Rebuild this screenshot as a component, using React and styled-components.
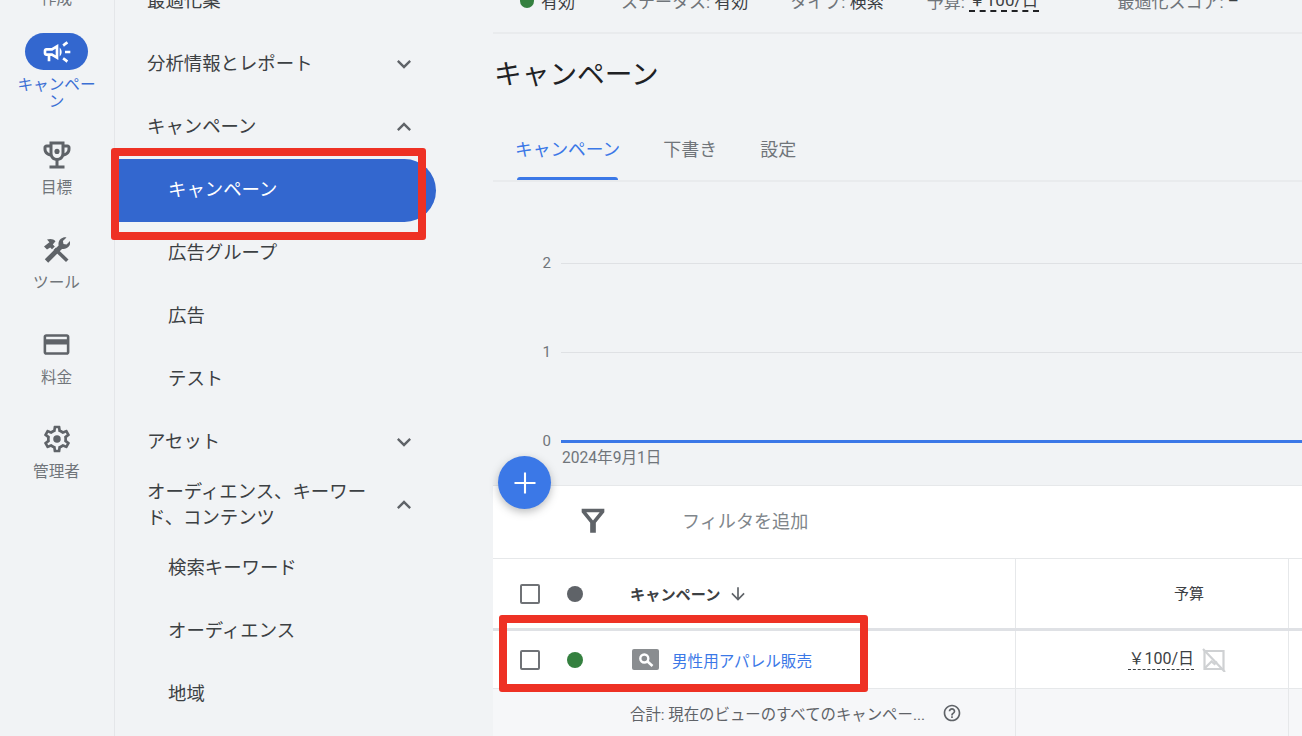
import React from 'react';
import styled, { createGlobalStyle } from 'styled-components';

const Global = createGlobalStyle`
  html, body { margin: 0; height: 100%; overflow: hidden; background: #f1f3f5; }
  body { font-family: Roboto, "Noto Sans CJK JP", sans-serif; }
  #root { height: 736px; }
`;

const Page = styled.div`
  position: relative;
  display: grid;
  grid-template-columns: 115px 378px 809px;
  width: 1302px;
  height: 736px;
  overflow: hidden;
  background: #f1f3f5;
`;

const Rail = styled.nav`
  display: flex;
  flex-direction: column;
  align-items: center;
  border-right: 1px solid #e4e6e9;
  margin-top: -12px;
  padding-right: 1px;
  height: 748px;
  box-sizing: border-box;
`;
const RailClip = styled.div`
  height: 13px;
  margin-bottom: 32px;
  font-size: 15.6px;
  line-height: 22px;
  color: #70757a;
`;
const RailItem = styled.div`
  display: flex;
  flex-direction: column;
  align-items: center;
  width: 80px;
  height: ${p => p.$h}px;
  font-size: 15.6px;
  line-height: 17px;
  text-align: center;
  color: ${p => (p.$active ? '#3b6fd4' : '#70757a')};
`;
const Pill = styled.div`
  display: flex;
  align-items: center;
  justify-content: center;
  width: 63px;
  height: 37px;
  margin-bottom: 7px;
  border-radius: 19px;
  background: ${p => (p.$active ? '#3367cf' : 'transparent')};
  color: ${p => (p.$active ? '#fff' : '#5f6368')};
`;

const Side = styled.aside`
  display: flex;
  flex-direction: column;
  margin-top: -31px;
`;
const NavRow = styled.div`
  display: flex;
  align-items: center;
  justify-content: space-between;
  box-sizing: border-box;
  flex: none;
  height: 63px;
  width: ${p => (p.$selected ? '321px' : '378px')};
  padding: 0 ${p => (p.$selected ? '0' : '75px')} ${p => (p.$selected ? '2px' : '0')} ${p => (p.$child ? '53px' : '32px')};
  font-size: 18.4px;
  line-height: 26px;
  color: ${p => (p.$selected ? '#fff' : '#3c4043')};
  background: ${p => (p.$selected ? '#3367cf' : 'transparent')};
  border-radius: ${p => (p.$selected ? '0 32px 32px 0' : '0')};
  ${p => p.$selected && 'margin: 1px 0 -1px;'}
`;
const NavLabel = styled.span`
  width: ${p => (p.$wrap ? '226px' : 'auto')};
`;
const Chevron = styled.span`
  display: flex;
  color: #5f6368;
`;

const Main = styled.main`
  display: flex;
  flex-direction: column;
  min-width: 0;
`;
const InfoBar = styled.div`
  display: flex;
  align-items: center;
  box-sizing: border-box;
  margin-top: -19px;
  flex: 0 0 53px;
  padding-left: 27px;
  padding-bottom: 12px;
  border-bottom: 2px solid #e9ebed;
  font-size: 17px;
  color: #70757a;
  white-space: nowrap;
`;
const Info = styled.span`
  display: inline-flex;
  align-items: center;
  margin-right: ${p => p.$gap}px;
`;
const Strong = styled.span`
  color: #3c4043;
`;
const Dashed = styled.span`
  color: #3c4043;
  border-bottom: 2px dashed #202124;
  line-height: 20px;
  margin-left: 4px;
`;
const Dot = styled.span`
  display: inline-block;
  flex: none;
  width: ${p => p.$s || 16}px;
  height: ${p => p.$s || 16}px;
  margin-right: ${p => p.$mr || 0}px;
  border-radius: 50%;
  background: ${p => p.$c};
`;
const Title = styled.h1`
  margin: 0;
  height: 82px;
  padding: 20px 0 0 1px;
  box-sizing: border-box;
  font-size: 27.7px;
  line-height: 42px;
  font-weight: 400;
  color: #202124;
`;
const Tabs = styled.div`
  display: flex;
  box-sizing: border-box;
  height: 66px;
  padding-left: 22px;
  border-bottom: 2px solid #e9ebed;
`;
const Tab = styled.div`
  position: relative;
  margin-right: 43px;
  padding-top: 21px;
  font-size: ${p => (p.$active ? '17.7px' : '18px')};
  line-height: 26px;
  color: ${p => (p.$active ? '#3b78e7' : '#70757a')};
  ${p => p.$active && `
    &::after {
      content: '';
      position: absolute;
      left: 2px;
      right: 2px;
      bottom: 0;
      height: 3px;
      border-radius: 3px 3px 0 0;
      background: #3b78e7;
    }
  `}
`;
const Chart = styled.div`
  display: flex;
  flex-direction: column;
  height: 303px;
  padding-top: 71px;
  box-sizing: border-box;
`;
const GridLine = styled.div`
  display: flex;
  align-items: center;
  height: 20px;
  margin-bottom: ${p => p.$mb}px;
  font-size: 15px;
  color: #70757a;
`;
const Tick = styled.span`
  width: 68px;
  box-sizing: border-box;
  padding-right: 10px;
  text-align: right;
  flex: none;
`;
const Line = styled.div`
  flex: 1;
  height: ${p => p.$h}px;
  background: ${p => p.$c};
`;
const DateLabel = styled.div`
  padding-left: 69px;
  margin-top: -3px;
  font-size: 15.6px;
  line-height: 20px;
  color: #70757a;
`;
const Fab = styled.div`
  position: absolute;
  left: 498px;
  top: 456px;
  display: flex;
  align-items: center;
  justify-content: center;
  width: 53px;
  height: 53px;
  border-radius: 50%;
  background: #3b78e7;
  box-shadow: 0 3px 8px rgba(60, 64, 67, .35);
  color: #fff;
`;
const Table = styled.section`
  display: flex;
  flex-direction: column;
  flex: 1;
  background: #fff;
  border-top: 1px solid #e6e8ea;
`;
const FilterBar = styled.div`
  display: flex;
  align-items: center;
  box-sizing: border-box;
  height: 73px;
  padding: 0 0 4px 83px;
  border-bottom: 1px solid #e6e8ea;
  font-size: 18.1px;
  color: #80868b;
`;
const FilterIcon = styled.span`
  display: flex;
  color: #5f6368;
`;
const FilterText = styled.span`
  margin-left: 72px;
`;
const Row = styled.div`
  display: grid;
  grid-template-columns: 522px 273px 1fr;
  box-sizing: border-box;
  height: ${p => p.$h}px;
  background: ${p => p.$bg || '#fff'};
  border-bottom: ${p => p.$bb || 'none'};
`;
const Cell = styled.div`
  display: flex;
  align-items: center;
  justify-content: ${p => (p.$end ? 'flex-end' : 'flex-start')};
  box-sizing: border-box;
  border-left: ${p => (p.$first ? 'none' : '1px solid #e6e8ea')};
  padding: ${p => p.$pad || '0'};
  font-size: 15px;
  color: #3c4043;
  white-space: nowrap;
  overflow: hidden;
`;
const Check = styled.span`
  flex: none;
  box-sizing: border-box;
  width: 20px;
  height: 20px;
  margin-left: 27px;
  border: 2px solid #6f7276;
  border-radius: 2px;
`;
const HeadName = styled.span`
  font-weight: 700;
  font-size: 15.2px;
  color: #3c4043;
  margin-left: 9px;
  margin-right: 8px;
  padding-bottom: 2px;
`;
const SortIcon = styled.span`
  display: flex;
  color: #5f6368;
`;
const Spacer = styled.span`
  flex: none;
  width: ${p => p.$w}px;
`;
const CampaignLink = styled.span`
  color: #3b78e7;
  font-size: 15.6px;
  margin-left: 13px;
`;
const BudgetValue = styled.span`
  border-bottom: 1px dashed #3c4043;
  font-size: 16px;
  line-height: 20px;
  color: #3c4043;
`;
const TotalText = styled.span`
  font-size: 15.4px;
  color: #5f6368;
  margin-left: 137px;
  margin-right: 17px;
`;
const HelpIcon = styled.span`
  display: flex;
  color: #5f6368;
`;
const RedFrame = styled.div`
  position: absolute;
  left: ${p => p.$x}px;
  top: ${p => p.$y}px;
  width: ${p => p.$w}px;
  height: ${p => p.$h}px;
  box-sizing: border-box;
  border: 8px solid #ee3124;
  border-radius: 3px;
`;

const Ico = ({ d, size = 24, children }) => (
  <svg width={size} height={size} viewBox="0 0 24 24" fill="currentColor">
    {d && <path d={d} />}
    {children}
  </svg>
);

const P = {
  campaign: 'M18 11v2h4v-2h-4zm-2 6.61c.96.71 2.21 1.65 3.2 2.39.4-.53.8-1.07 1.2-1.6-.99-.74-2.24-1.68-3.2-2.4-.4.54-.8 1.08-1.2 1.61zM20.4 5.6c-.4-.53-.8-1.07-1.2-1.6-.99.74-2.24 1.68-3.2 2.4.4.53.8 1.07 1.2 1.6.96-.72 2.21-1.65 3.2-2.4zM4 9c-1.1 0-2 .9-2 2v2c0 1.1.9 2 2 2h1v4h2v-4h1l5 3V6L8 9H4zm5.03 1.71L11 9.53v4.94l-1.97-1.18-.48-.29H4v-2h4.55l.48-.29zM15.5 12c0-1.33-.58-2.53-1.5-3.35v6.69c.92-.81 1.5-2.01 1.5-3.34z',
  trophy: 'M19 5h-2V3H7v2H5c-1.1 0-2 .9-2 2v1c0 2.55 1.92 4.63 4.39 4.94.63 1.5 1.98 2.63 3.61 2.96V19H7v2h10v-2h-4v-3.1c1.63-.33 2.98-1.46 3.61-2.96C19.08 12.63 21 10.55 21 8V7c0-1.1-.9-2-2-2zM5 8V7h2v3.82C5.84 10.4 5 9.3 5 8zm7 6c-1.65 0-3-1.35-3-3V5h6v6c0 1.65-1.35 3-3 3zm7-6c0 1.3-.84 2.4-2 2.82V7h2v1z',
  card: 'M20 4H4c-1.11 0-1.99.89-1.99 2L2 18c0 1.11.89 2 2 2h16c1.11 0 2-.89 2-2V6c0-1.11-.89-2-2-2zm0 14H4v-6h16v6zm0-10H4V6h16v2z',
  gear: 'M19.43 12.98c.04-.32.07-.64.07-.98 0-.34-.03-.66-.07-.98l2.11-1.65c.19-.15.24-.42.12-.64l-2-3.46c-.12-.22-.39-.3-.61-.22l-2.49 1c-.52-.4-1.08-.73-1.69-.98l-.38-2.65C14.46 2.18 14.25 2 14 2h-4c-.25 0-.46.18-.49.42l-.38 2.65c-.61.25-1.17.59-1.69.98l-2.49-1c-.23-.09-.49 0-.61.22l-2 3.46c-.13.22-.07.49.12.64l2.11 1.65c-.04.32-.07.65-.07.98 0 .33.03.66.07.98l-2.11 1.65c-.19.15-.24.42-.12.64l2 3.46c.12.22.39.3.61.22l2.49-1c.52.4 1.08.73 1.69.98l.38 2.65c.03.24.24.42.49.42h4c.25 0 .46-.18.49-.42l.38-2.65c.61-.25 1.17-.59 1.69-.98l2.49 1c.23.09.49 0 .61-.22l2-3.46c.12-.22.07-.49-.12-.64l-2.11-1.65zm-1.98-1.71c.04.31.05.52.05.73 0 .21-.02.43-.05.73l-.14 1.13.89.7 1.08.84-.7 1.21-1.27-.51-1.04-.42-.9.68c-.43.32-.84.56-1.25.73l-1.06.43-.16 1.13-.2 1.35h-1.4l-.19-1.35-.16-1.13-1.06-.43c-.43-.18-.83-.41-1.23-.71l-.91-.7-1.06.43-1.27.51-.7-1.21 1.08-.84.89-.7-.14-1.13c-.03-.31-.05-.54-.05-.74s.02-.43.05-.73l.14-1.13-.89-.7-1.08-.84.7-1.21 1.27.51 1.04.42.9-.68c.43-.32.84-.56 1.25-.73l1.06-.43.16-1.13.2-1.35h1.39l.19 1.35.16 1.13 1.06.43c.43.18.83.41 1.23.71l.91.7 1.06-.43 1.27-.51.7 1.21-1.07.85-.89.7.14 1.13z',
  down: 'M7.41 8.59L12 13.17l4.59-4.58L18 10l-6 6-6-6z',
  up: 'M7.41 15.41L12 10.83l4.59 4.58L18 14l-6-6-6 6z',
  filter: 'M4 4h16v2.5L14 14v7h-4v-7L4 6.5V4zm3.3 2.5L12 12.3l4.7-5.8H7.3z',
  arrow: 'M20 12l-1.41-1.41L13 16.17V4h-2v12.17l-5.58-5.59L4 12l8 8 8-8z',
  help: 'M11 18h2v-2h-2v2zm1-16C6.48 2 2 6.48 2 12s4.48 10 10 10 10-4.48 10-10S17.52 2 12 2zm0 18c-4.41 0-8-3.59-8-8s3.59-8 8-8 8 3.59 8 8-3.59 8-8 8zm0-14c-2.21 0-4 1.79-4 4h2c0-1.1.9-2 2-2s2 .9 2 2c0 2-3 1.75-3 5h2c0-2.25 3-2.5 3-5 0-2.21-1.79-4-4-4z',
  plus: 'M19 12.7h-6.3V19h-1.4v-6.3H5v-1.4h6.3V5h1.4v6.3H19z',
};

const ToolsIcon = () => (
  <svg width="27" height="27" viewBox="0 0 27 27" fill="currentColor">
    <path d="M3.5 25 1.8 23.3 15.6 9.5c-.5-2.6.3-5 2.3-6.7 1.6-1.4 3.7-1.9 5.6-1.4l-3.6 3.6.6 3 3 .6 3.6-3.6c.5 2 0 4-1.4 5.6-1.7 2-4.1 2.8-6.7 2.3L5.2 26.7z" />
    <path d="M1 10.5 4 13.5 7.2 11.5 9 13.2 11.8 10.4 9.8 8.4 12.5 5.2C10.6 3 7.4 2.2 4 3.6L6.4 6.2z" />
    <path d="M10.5 14 13 11.5 25.5 23.5 23 26z" />
  </svg>
);

const SearchBadge = () => (
  <svg width="27" height="21" viewBox="0 0 27 21">
    <rect width="27" height="21" rx="2" fill="#8a8d90" />
    <circle cx="12.3" cy="9.5" r="4" fill="none" stroke="#fff" strokeWidth="2.4" />
    <path d="M15.5 12.5l5 4.5" stroke="#fff" strokeWidth="2.6" />
  </svg>
);
const NoChart = () => (
  <svg width="24" height="24" viewBox="0 0 24 24" fill="none" stroke="#cfd1d3" strokeWidth="2.2">
    <path d="M2.5 3h19v18h-19z" />
    <path d="M1 1l22 23M3 20l6.5-6.5 3 2.5 2.5-2.5" />
  </svg>
);

const railItems = [
  { label: 'キャンペーン', icon: <Ico d={P.campaign} size={32} />, active: true, h: 103 },
  { label: '目標', icon: <Ico d={P.trophy} size={36}><circle cx="12" cy="9.6" r="1.7" /></Ico>, h: 95 },
  { label: 'ツール', icon: <ToolsIcon />, h: 95 },
  { label: '料金', icon: <Ico d={P.card} size={31} />, h: 94 },
  { label: '管理者', icon: <Ico d={P.gear} size={32}><circle cx="12" cy="12" r="2.8" /></Ico>, h: 95 },
];

const nav = [
  { t: '最適化案' },
  { t: '分析情報とレポート', c: 'down' },
  { t: 'キャンペーン', c: 'up' },
  { t: 'キャンペーン', child: true, selected: true },
  { t: '広告グループ', child: true },
  { t: '広告', child: true },
  { t: 'テスト', child: true },
  { t: 'アセット', c: 'down' },
  { t: 'オーディエンス、キーワード、コンテンツ', c: 'up', wrap: true },
  { t: '検索キーワード', child: true },
  { t: 'オーディエンス', child: true },
  { t: '地域', child: true },
];

export default function App() {
  return (
    <Page>
      <Global />
      <Rail>
        <RailClip>作成</RailClip>
        {railItems.map(i => (
          <RailItem key={i.label} $active={i.active} $h={i.h}>
            <Pill $active={i.active}>{i.icon}</Pill>
            {i.label}
          </RailItem>
        ))}
      </Rail>
      <Side>
        {nav.map((n, idx) => (
          <NavRow key={idx} $child={n.child} $selected={n.selected}>
            <NavLabel $wrap={n.wrap}>{n.t}</NavLabel>
            {n.c && <Chevron><Ico d={P[n.c]} size={28} /></Chevron>}
          </NavRow>
        ))}
      </Side>
      <Main>
        <InfoBar>
          <Info $gap={46}><Dot $c="#34803f" $s={14} $mr={7} /><Strong>有効</Strong></Info>
          <Info $gap={42}>ステータス:&nbsp;<Strong>有効</Strong></Info>
          <Info $gap={43}>タイプ:&nbsp;<Strong>検索</Strong></Info>
          <Info $gap={79}>予算:<Dashed>￥100/日</Dashed></Info>
          <Info $gap={0}>最適化スコア:&nbsp;<Strong>–</Strong></Info>
        </InfoBar>
        <Title>キャンペーン</Title>
        <Tabs>
          <Tab $active>キャンペーン</Tab>
          <Tab>下書き</Tab>
          <Tab>設定</Tab>
        </Tabs>
        <Chart>
          <GridLine $mb={69}><Tick>2</Tick><Line $h={1} $c="#dfe1e4" /></GridLine>
          <GridLine $mb={69}><Tick>1</Tick><Line $h={1} $c="#dfe1e4" /></GridLine>
          <GridLine $mb={0}><Tick>0</Tick><Line $h={3} $c="#3b78e7" /></GridLine>
          <DateLabel>2024年9月1日</DateLabel>
        </Chart>
        <Table>
          <FilterBar>
            <FilterIcon><Ico d={P.filter} size={34} /></FilterIcon>
            <FilterText>フィルタを追加</FilterText>
          </FilterBar>
          <Row $h={72} $bb="3px solid #dfe1e5">
            <Cell $first>
              <Check /><Spacer $w={27} /><Dot $c="#5f6368" /><Spacer $w={38} />
              <HeadName>キャンペーン</HeadName>
              <SortIcon><Ico d={P.arrow} size={20} /></SortIcon>
            </Cell>
            <Cell $end $pad="0 84px 2px 0">予算</Cell>
            <Cell />
          </Row>
          <Row $h={58} $bb="1px solid #e6e8ea">
            <Cell $first>
              <Check /><Spacer $w={27} /><Dot $c="#34803f" /><Spacer $w={49} />
              <SearchBadge />
              <CampaignLink>男性用アパレル販売</CampaignLink>
            </Cell>
            <Cell $end $pad="0 62px 0 0"><BudgetValue>￥100/日</BudgetValue><Spacer $w={8} /><NoChart /></Cell>
            <Cell />
          </Row>
          <Row $h={48} $bg="#f6f7f9">
            <Cell $first>
              <TotalText>合計: 現在のビューのすべてのキャンペー...</TotalText>
              <HelpIcon><Ico d={P.help} size={20} /></HelpIcon>
            </Cell>
            <Cell />
            <Cell />
          </Row>
        </Table>
      </Main>
      <Fab><Ico d={P.plus} size={36} /></Fab>
      <RedFrame $x={111} $y={148} $w={315} $h={92} />
      <RedFrame $x={499} $y={615} $w={369} $h={77} />
    </Page>
  );
}
